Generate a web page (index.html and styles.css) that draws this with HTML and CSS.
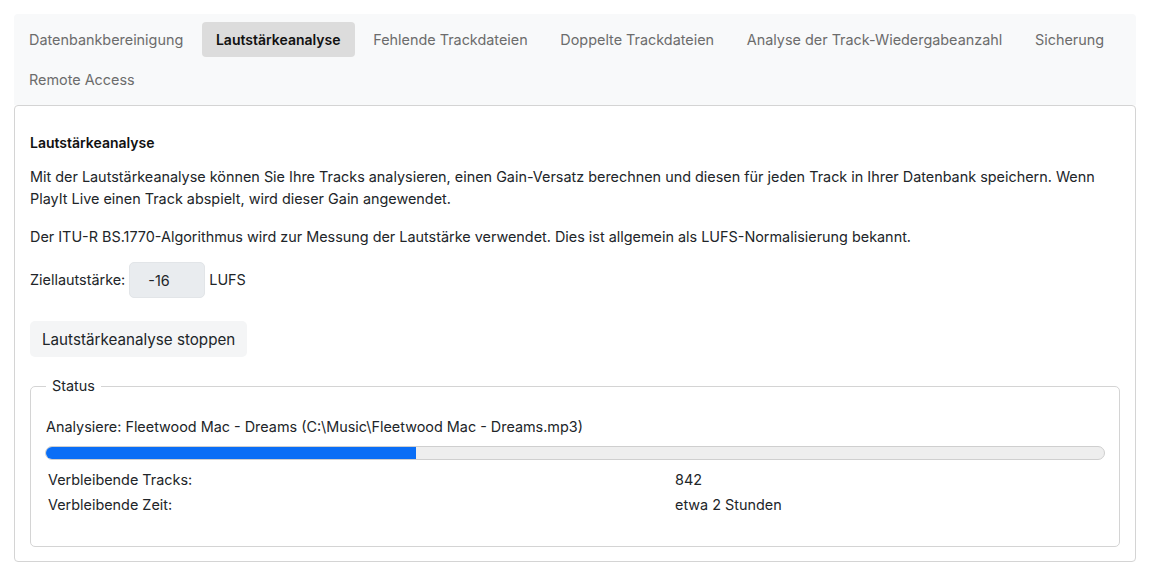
FILE: index.html
```html
<!DOCTYPE html>
<html lang="de">
<head>
    <meta charset="UTF-8">
    <title>Wartung</title>
    <link rel="stylesheet" href="styles.css">
</head>
<body>
    <div class="tabs">
        <button class="tab">Datenbankbereinigung</button>
        <button class="tab active">Lautstärkeanalyse</button>
        <button class="tab">Fehlende Trackdateien</button>
        <button class="tab">Doppelte Trackdateien</button>
        <button class="tab">Analyse der Track-Wiedergabeanzahl</button>
        <button class="tab">Sicherung</button>
        <button class="tab">Remote Access</button>
    </div>

    <div class="card">
        <h2>Lautstärkeanalyse</h2>
        <p>Mit der Lautstärkeanalyse können Sie Ihre Tracks analysieren, einen Gain-Versatz berechnen und diesen für jeden Track in Ihrer Datenbank speichern. Wenn PlayIt Live einen Track abspielt, wird dieser Gain angewendet.</p>
        <p>Der ITU-R BS.1770-Algorithmus wird zur Messung der Lautstärke verwendet. Dies ist allgemein als LUFS-Normalisierung bekannt.</p>

        <div class="target">
            <label for="target">Ziellautstärke:</label>
            <input type="text" id="target" value="-16">
            <span>LUFS</span>
        </div>

        <button class="btn">Lautstärkeanalyse stoppen</button>

        <fieldset class="status">
            <legend>Status</legend>
            <p class="current">Analysiere: Fleetwood Mac - Dreams (C:\Music\Fleetwood Mac - Dreams.mp3)</p>
            <div class="progress"><div class="progress-fill" style="width: 35%"></div></div>
            <div class="stats">
                <span>Verbleibende Tracks:</span>
                <span>842</span>
                <span>Verbleibende Zeit:</span>
                <span>etwa 2 Stunden</span>
            </div>
        </fieldset>
    </div>
</body>
</html>
```

FILE: styles.css
```css
* {
    box-sizing: border-box;
    margin: 0;
    padding: 0;
    font-family: 'Inter', 'Noto Sans', sans-serif;
}

body {
    background: white;
    padding: 14px;
    color: #212529;
    font-size: 14.4px;
    line-height: 22px;
}

.tabs {
    background: #f8f9fa;
    display: flex;
    flex-wrap: wrap;
    gap: 5px 4.7px;
    padding: 8px 1px;
    border-top-left-radius: 4px;
    border-top-right-radius: 4px;
}

.tab {
    height: 35px;
    padding: 0 14px;
    border: none;
    border-radius: 4px;
    background: none;
    color: #6c6c6c;
    font-size: 14.4px;
    cursor: pointer;
}

.tab.active {
    background: #dcdcdc;
    color: #111;
    font-size: 14px;
    font-weight: 600;
}

.card {
    border: 1px solid #d4d4d4;
    border-radius: 4px;
    padding: 26px 15px 14px;
}

.card h2 {
    font-size: 14px;
    font-weight: 600;
    color: #111;
    margin-bottom: 12px;
}

.card p {
    margin-bottom: 16px;
}

.target {
    display: flex;
    align-items: center;
    gap: 4px;
    margin-top: -2px;
}

.target input {
    width: 76px;
    height: 36px;
    border: 1px solid #e2e5e8;
    border-radius: 5px;
    background: #e9ecef;
    padding: 0 0 0 18px;
    font-size: 14.4px;
    color: #212529;
}

.btn {
    display: block;
    margin-top: 23px;
    height: 36px;
    padding: 0 12px;
    border: none;
    border-radius: 5px;
    background: #f4f5f6;
    color: #212529;
    font-size: 15.2px;
}

.status {
    margin-top: 18px;
    border: 1px solid #d4d4d4;
    border-radius: 5px;
    padding: 0 15px 30px;
}

.status legend {
    padding: 0 6px;
    margin-left: 0;
}

.status .current {
    margin: 19px 0 8px;
}

.progress {
    height: 14px;
    margin: 0 -1px;
    background: #eeeeee;
    border: 1px solid #cfcfcf;
    border-radius: 7px;
    overflow: hidden;
}

.progress-fill {
    height: 100%;
    background: #0a6ef6;
}

.stats {
    display: grid;
    grid-template-columns: 627px 1fr;
    row-gap: 3px;
    margin-top: 9px;
    padding-left: 2px;
}
```
